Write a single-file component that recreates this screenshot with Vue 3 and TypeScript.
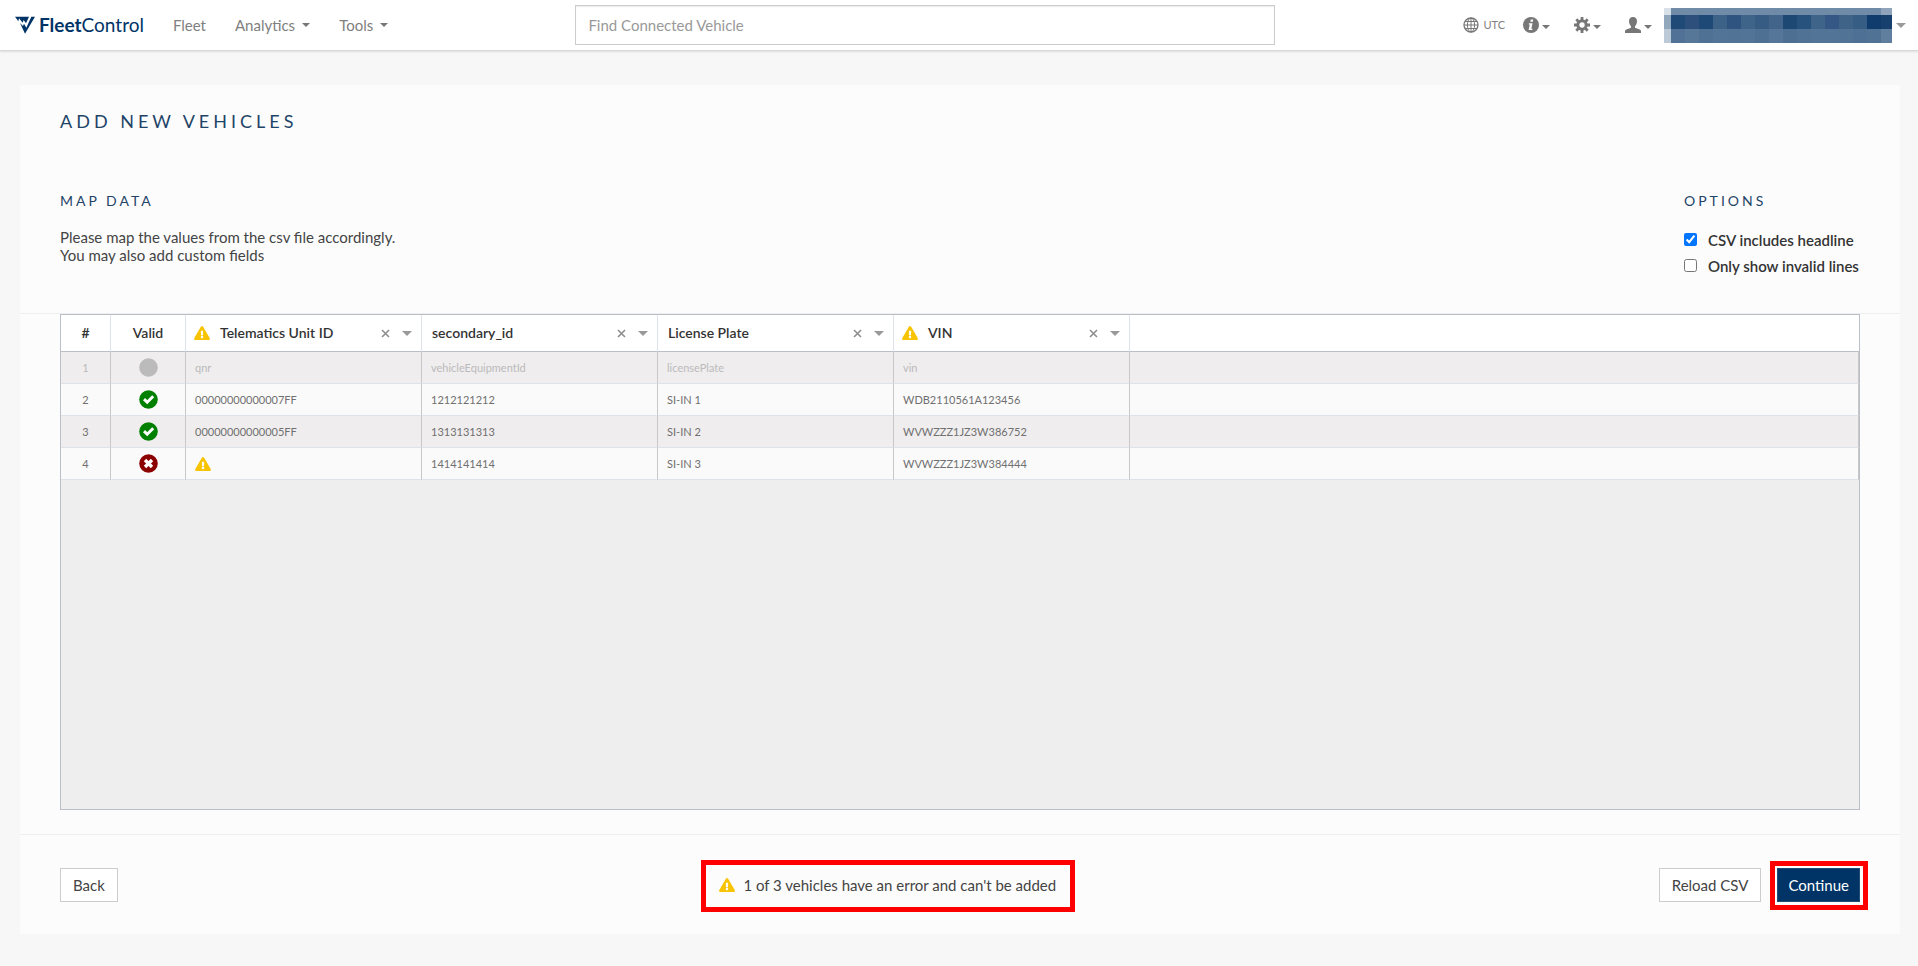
<script setup lang="ts">
import { computed, ref } from 'vue'

interface Column { label: string; warn: boolean }
interface Row { status: 'head' | 'ok' | 'error'; cells: string[] }

const menus = ['Analytics', 'Tools']
const csvHeadline = ref(true)
const onlyInvalid = ref(false)

const columns: Column[] = [
  { label: 'Telematics Unit ID', warn: true },
  { label: 'secondary_id', warn: false },
  { label: 'License Plate', warn: false },
  { label: 'VIN', warn: true },
]

const rows: Row[] = [
  { status: 'head', cells: ['qnr', 'vehicleEquipmentId', 'licensePlate', 'vin'] },
  { status: 'ok', cells: ['00000000000007FF', '1212121212', 'SI-IN 1', 'WDB2110561A123456'] },
  { status: 'ok', cells: ['00000000000005FF', '1313131313', 'SI-IN 2', 'WVWZZZ1JZ3W386752'] },
  { status: 'error', cells: ['', '1414141414', 'SI-IN 3', 'WVWZZZ1JZ3W384444'] },
]
const numbered = computed(() =>
  rows.map((row, i) => ({ ...row, n: i + 1 })).filter(r => !onlyInvalid.value || r.status === 'error'))

const warnPath = 'M569.5 440C588 472 564.800 512 527.900 512H48C11.100 512-12 472 6.500 440L246.400 24c18.500-32 64.700-32 83.200 0l239.900 416zM288 354c-25.400 0-46 20.600-46 46s20.600 46 46 46 46-20.600 46-46-20.600-46-46-46zm-43.700-165.300l7.400 136c.4 6.300 5.600 11.300 12 11.300h48.600c6.400 0 11.600-5 12-11.300l7.400-136c.4-6.900-5.100-12.700-12-12.700h-63.400c-6.900 0-12.400 5.800-12 12.700z'

const tiles: string[][] = [
  ['#d9e1e8', ...Array(15).fill('#6f8ba7'), '#8fa4ba'],
  ['#91a7bb', '#1f4a77', '#2c4f7c', '#1e4875', '#3c6288', '#2f547f', '#3f6489', '#365c83', '#43648a', '#1e4874', '#28527e', '#3f6489', '#355785', '#3e6387', '#365d83', '#0f3c6c', '#17406f'],
  ['#bccad8', '#517296', '#577799', '#4e7194', '#527497', '#507396', '#527497', '#4d7093', '#557699', '#4c6f92', '#507295', '#527497', '#527497', '#517396', '#4d7094', '#4f7295', '#607f9f'],
]
</script>

<template>
  <div class="page">
    <header class="topbar">
      <div class="left">
        <a class="brand" href="#" aria-label="FleetControl">
          <svg width="20" height="18" viewBox="0 0 60 54" aria-hidden="true">
            <path fill="#036" d="M0 2H42L33 22 26 12 23 20 12 7 10 16ZM15 21 24 30 27 23 34 35 49 2H60L30 53Z" />
          </svg>
          <span><b>Fleet</b>Control</span>
        </a>
        <nav class="menu">
          <a href="#">Fleet</a>
          <a v-for="m in menus" :key="m" href="#">{{ m }} <i class="caret"></i></a>
        </nav>
      </div>
      <input class="search" type="text" placeholder="Find Connected Vehicle" aria-label="Find Connected Vehicle" />
      <div class="tools">
        <button class="tool utc" type="button">
          <svg width="16" height="16" viewBox="0 0 16 16" fill="none" stroke="#777" stroke-width="1" aria-hidden="true">
            <circle cx="8" cy="8" r="7" stroke-width="1.3" /><ellipse cx="8" cy="8" rx="3.6" ry="7" />
            <path d="M8 1V15M1 8H15M2 4.5H14M2 11.5H14" />
          </svg>
          UTC
        </button>
        <button class="tool" type="button" aria-label="Information">
          <svg width="16" height="16" viewBox="0 0 16 16" aria-hidden="true">
            <circle cx="8" cy="8" r="8" fill="#777" />
            <path fill="#fff" d="M7.8 2.6h2.5l-.5 2.2H7.300zM6 6.200h3.600L8.300 11.800h1.200l-.3 1.200H5.600l1.200-5.500H5.700z" />
          </svg>
          <i class="caret"></i>
        </button>
        <button class="tool" type="button" aria-label="Settings">
          <svg width="16" height="16" viewBox="0 0 16 16" aria-hidden="true">
            <circle cx="8" cy="8" r="4.200" fill="none" stroke="#777" stroke-width="3" />
            <path stroke="#777" stroke-width="2.800" d="M8 0V3M8 13V16M0 8H3M13 8H16M2.300 2.300 4.400 4.400M11.600 11.600 13.700 13.700M2.300 13.700 4.400 11.600M11.600 4.400 13.700 2.300" />
          </svg>
          <i class="caret"></i>
        </button>
        <button class="tool" type="button" aria-label="Account">
          <svg width="16" height="16" viewBox="0 0 16 16" aria-hidden="true">
            <path fill="#777" d="M8 0c2.600 0 4 1.800 4 4.300 0 2.200-1 4-2 5v1.500l4.600 1.700c1 .4 1.400 1 1.400 2V16H0v-1.500c0-1 .4-1.600 1.400-2L6 10.800V9.300c-1-1-2-2.800-2-5C4 1.800 5.400 0 8 0z" />
          </svg>
          <i class="caret"></i>
        </button>
        <button class="tenant" type="button" aria-label="Customer">
          <span class="mosaic" aria-hidden="true">
            <template v-for="(line, r) in tiles" :key="r">
              <span v-for="(c, i) in line" :key="i" :style="{ background: c }"></span>
            </template>
          </span>
          <i class="caret wide"></i>
        </button>
      </div>
    </header>

    <main class="card">
      <h1>ADD NEW VEHICLES</h1>
      <div class="intro">
        <section>
          <h2>MAP DATA</h2>
          <p>Please map the values from the csv file accordingly.<br />You may also add custom fields</p>
        </section>
        <section class="options">
          <h2>OPTIONS</h2>
          <label class="option"><input v-model="csvHeadline" type="checkbox" /> CSV includes headline</label>
          <label class="option"><input v-model="onlyInvalid" type="checkbox" /> Only show invalid lines</label>
        </section>
      </div>

      <div class="grid-area">
        <div class="grid">
          <table>
            <colgroup>
              <col class="c-num" /><col class="c-valid" />
              <col v-for="c in columns" :key="c.label" class="c-data" /><col />
            </colgroup>
            <thead>
              <tr>
                <th class="mid">#</th>
                <th class="mid">Valid</th>
                <th v-for="c in columns" :key="c.label">
                  <div class="head">
                    <svg v-if="c.warn" class="warn" viewBox="0 0 576 512" role="img" aria-label="Warning"><path :d="warnPath" /></svg>
                    <span class="name">{{ c.label }}</span>
                    <button type="button" class="icon-btn" :aria-label="`Remove ${c.label}`">
                      <svg width="9" height="9" viewBox="0 0 9 9"><path stroke="#8e8e8e" stroke-width="1.600" d="M1 1 8 8M8 1 1 8" /></svg>
                    </button>
                    <button type="button" class="icon-btn" :aria-label="`Map ${c.label}`"><i class="caret wide"></i></button>
                  </div>
                </th>
                <th class="rest"></th>
              </tr>
            </thead>
            <tbody>
              <tr v-for="row in numbered" :key="row.n" :class="row.status">
                <td class="mid">{{ row.n }}</td>
                <td class="mid">
                  <svg class="status" viewBox="0 0 19 19" role="img" :aria-label="row.status">
                    <circle cx="9.500" cy="9.500" r="9.300" :fill="row.status === 'head' ? '#bbb' : row.status === 'ok' ? '#008000' : '#8b0000'" />
                    <path v-if="row.status === 'ok'" fill="none" stroke="#fff" stroke-width="3" d="M5 9.200 8.200 12.200 14.200 6.200" />
                    <path v-if="row.status === 'error'" stroke="#fff" stroke-width="3.400" d="M6 6 13 13M13 6 6 13" />
                  </svg>
                </td>
                <td v-for="(cell, i) in row.cells" :key="i">
                  <template v-if="cell">{{ cell }}</template>
                  <svg v-else class="warn" viewBox="0 0 576 512" role="img" aria-label="Missing value"><path :d="warnPath" /></svg>
                </td>
                <td class="rest"></td>
              </tr>
            </tbody>
          </table>
        </div>
      </div>

      <footer class="actions">
        <button type="button" class="btn">Back</button>
        <p class="alert">
          <svg class="warn" viewBox="0 0 576 512" aria-hidden="true"><path :d="warnPath" /></svg>
          1 of 3 vehicles have an error and can't be added
        </p>
        <div class="end">
          <button type="button" class="btn">Reload CSV</button>
          <span class="mark"><button type="button" class="btn primary">Continue</button></span>
        </div>
      </footer>
    </main>
  </div>
</template>

<style>
body { margin: 0; background: #f7f7f7; }
</style>

<style scoped>
.page {
  font-family: Lato, "Open Sans", sans-serif;
  font-size: 15px;
  line-height: 18px;
  color: #444;
}
.page * { box-sizing: border-box; }
button, input { font: inherit; color: inherit; }
button { cursor: pointer; }
a { color: #808080; text-decoration: none; }
svg { display: block; flex: none; }

.caret {
  display: inline-block;
  border: 4px solid transparent;
  border-top-color: #777;
  border-bottom: 0;
}
.caret.wide { border-width: 5px 5px 0; border-top-color: #999; }

.topbar {
  display: grid;
  grid-template-columns: 30% 36.5% 1fr;
  align-items: center;
  height: 51px;
  background: #fff;
  border-bottom: 1px solid #d8d8d8;
  box-shadow: 0 1px 2px rgba(0, 0, 0, .1);
}
.left { display: flex; align-items: center; gap: 29px; padding-left: 15px; }
.brand { display: flex; align-items: center; gap: 4px; color: #036; font-size: 19px; }
.menu { display: flex; gap: 29px; }
.menu a { display: flex; align-items: center; gap: 7px; }
.search {
  width: 100%;
  height: 40px;
  padding: 0 12px;
  border: 1px solid #ccc;
  background: #fff;
  box-shadow: inset 0 1px 1px rgba(0, 0, 0, .08);
}
.search::placeholder { color: #999; opacity: 1; }
.tools { display: flex; align-items: center; justify-content: flex-end; padding-right: 12px; color: #808080; }
.tool, .tenant, .icon-btn {
  display: flex;
  align-items: center;
  border: 0;
  padding: 0;
  background: none;
}
.tool { gap: 3px; margin-right: 24px; }
.tool .caret { margin-top: 4px; }
.tool.utc { gap: 4px; margin-right: 18px; font-size: 11px; }
.tool:nth-child(4) { margin-right: 12px; }
.tenant { gap: 4px; }
.mosaic {
  display: grid;
  grid-template-columns: 7px repeat(15, 14px) 11px;
  grid-template-rows: 7px 14px 14px;
}

.card { margin: 34px 18px 0 20px; padding: 26px 0 22px; background: #fcfcfc; }
h1, h2 { margin: 0; font-weight: 400; color: #1f4468; }
h1 { padding: 0 40px; font-size: 18px; line-height: 20px; letter-spacing: 4px; }
h2 { font-size: 14px; line-height: 18px; letter-spacing: 3px; }
p { margin: 0; }
.intro { display: flex; justify-content: space-between; padding: 61px 40px 0; height: 182px; }
.intro p { margin-top: 18px; }
.options { min-width: 176px; }
.option { display: flex; align-items: center; gap: 11px; margin-top: 8px; font-weight: 600; color: #333; }
h2 + .option { margin-top: 21px; }
.option input { width: 13px; height: 13px; margin: 0 0 2px; }

.grid-area { padding: 0 40px 24px; border-top: 1px solid #eee; border-bottom: 1px solid #eee; }
.grid {
  height: calc(100vh - 470px);
  min-height: 200px;
  overflow: auto;
  border: 1px solid #babfc7;
  background: #eee;
}
table { width: 100%; border-collapse: separate; border-spacing: 0; table-layout: fixed; }
.c-num { width: 50px; }
.c-valid { width: 75px; }
.c-data { width: 236px; }
th {
  height: 37px;
  padding: 0 9px 0 10px;
  background: #fff;
  border-right: 1px solid #dde2eb;
  border-bottom: 1px solid #babfc7;
  font-size: 14px;
  font-weight: 600;
  text-align: left;
  color: #333;
}
td {
  height: 32px;
  padding: 0 9px;
  background: #fafafa;
  border-right: 1px solid #c8c8c8;
  border-bottom: 1px solid #dde2eb;
  font-size: 11px;
  color: #707070;
}
tbody tr:nth-child(odd) td { background: #efedee; }
tbody .head td { color: #bbb; }
.mid { padding: 0; text-align: center; }
th.rest { border-right: 0; }
.head .name { flex: 1; }
div.head { display: flex; align-items: center; }
div.head .warn { margin: 0 10px 0 -2px; }
.icon-btn { margin-left: 12px; }
.warn { width: 16px; height: 14px; fill: #f8c300; }
.status { width: 19px; height: 19px; margin: 0 auto; }

.actions { display: flex; justify-content: space-between; align-items: center; padding: 25px 32px 0 40px; }
.actions > .btn { margin-bottom: 2px; }
.btn { height: 34px; padding: 0 12px; border: 1px solid #ccc; background: #fff; }
.btn.primary { padding: 0 10px; background: #036; border-color: #204d74; color: #fff; }
.alert { display: flex; align-items: center; gap: 8px; height: 52px; padding: 0 14px 2px 13px; border: 5px solid red; }
.end { display: flex; align-items: flex-start; gap: 9px; margin-bottom: 1px; }
.end > .btn { margin-top: 7px; }
.mark { display: flex; padding: 2px 3px 3px 2px; border: 5px solid red; }
</style>
